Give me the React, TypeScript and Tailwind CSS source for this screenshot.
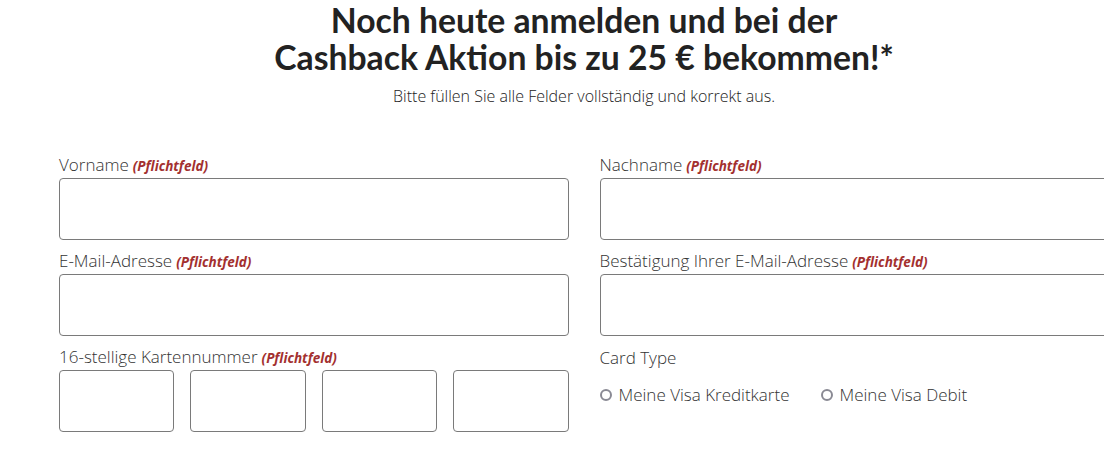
import React from "react";

function Req() {
  return <span className="ml-1 text-[13.5px] font-bold italic text-[#a3302f]">(Pflichtfeld)</span>;
}

function Field({ label, req = true }: { label: string; req?: boolean }) {
  return (
    <div className="flex flex-col">
      <label className="h-[24px] text-[17px] font-light leading-[24px] text-[#333]">
        {label}
        {req && <Req />}
      </label>
      <input className="mt-[1px] h-[62px] w-full rounded-[4px] border border-[#7a7a7a] bg-white" />
    </div>
  );
}

function Radio({ label }: { label: string }) {
  return (
    <label className="flex items-center gap-[7px] text-[17px] font-light text-[#333]">
      <span className="h-[12px] w-[12px] rounded-full border-2 border-[#8a8a94]" />
      {label}
    </label>
  );
}

export default function App() {
  return (
    <div className="w-full overflow-hidden bg-white" style={{ fontFamily: '"Open Sans", "Noto Sans", sans-serif' }}>
      <div className="w-[1168px]">
        <header className="pt-[2px] text-center">
          <h1 className="text-[33.7px] font-bold leading-[37px] text-[#222]" style={{ fontFamily: 'Lato, "Open Sans", sans-serif' }}>
            Noch heute anmelden und bei der
            <br />
            Cashback Aktion bis zu 25 € bekommen!*
          </h1>
          <p className="mt-[8px] text-[16px] font-light text-[#222]">Bitte füllen Sie alle Felder vollständig und korrekt aus.</p>
        </header>

        <form className="mt-[45px] grid grid-cols-2 gap-x-[31px] gap-y-[9px] px-[59px]">
          <Field label="Vorname" />
          <Field label="Nachname" />
          <Field label="E-Mail-Adresse" />
          <Field label="Bestätigung Ihrer E-Mail-Adresse" />
          <div className="flex flex-col">
            <label className="h-[24px] text-[17px] font-light leading-[24px] text-[#333]">
              16-stellige Kartennummer
              <Req />
            </label>
            <div className="mt-[1px] grid grid-cols-4 gap-[16px]">
              <input className="h-[62px] w-full rounded-[4px] border border-[#7a7a7a]" />
              <input className="h-[62px] w-full rounded-[4px] border border-[#7a7a7a]" />
              <input className="h-[62px] w-full rounded-[4px] border border-[#7a7a7a]" />
              <input className="h-[62px] w-full rounded-[4px] border border-[#7a7a7a]" />
            </div>
          </div>
          <div className="flex flex-col">
            <span className="h-[26px] text-[17px] font-light leading-[26px] text-[#333]">Card Type</span>
            <div className="mt-[11px] flex gap-[31px]">
              <Radio label="Meine Visa Kreditkarte" />
              <Radio label="Meine Visa Debit" />
            </div>
          </div>
        </form>
      </div>
    </div>
  );
}
